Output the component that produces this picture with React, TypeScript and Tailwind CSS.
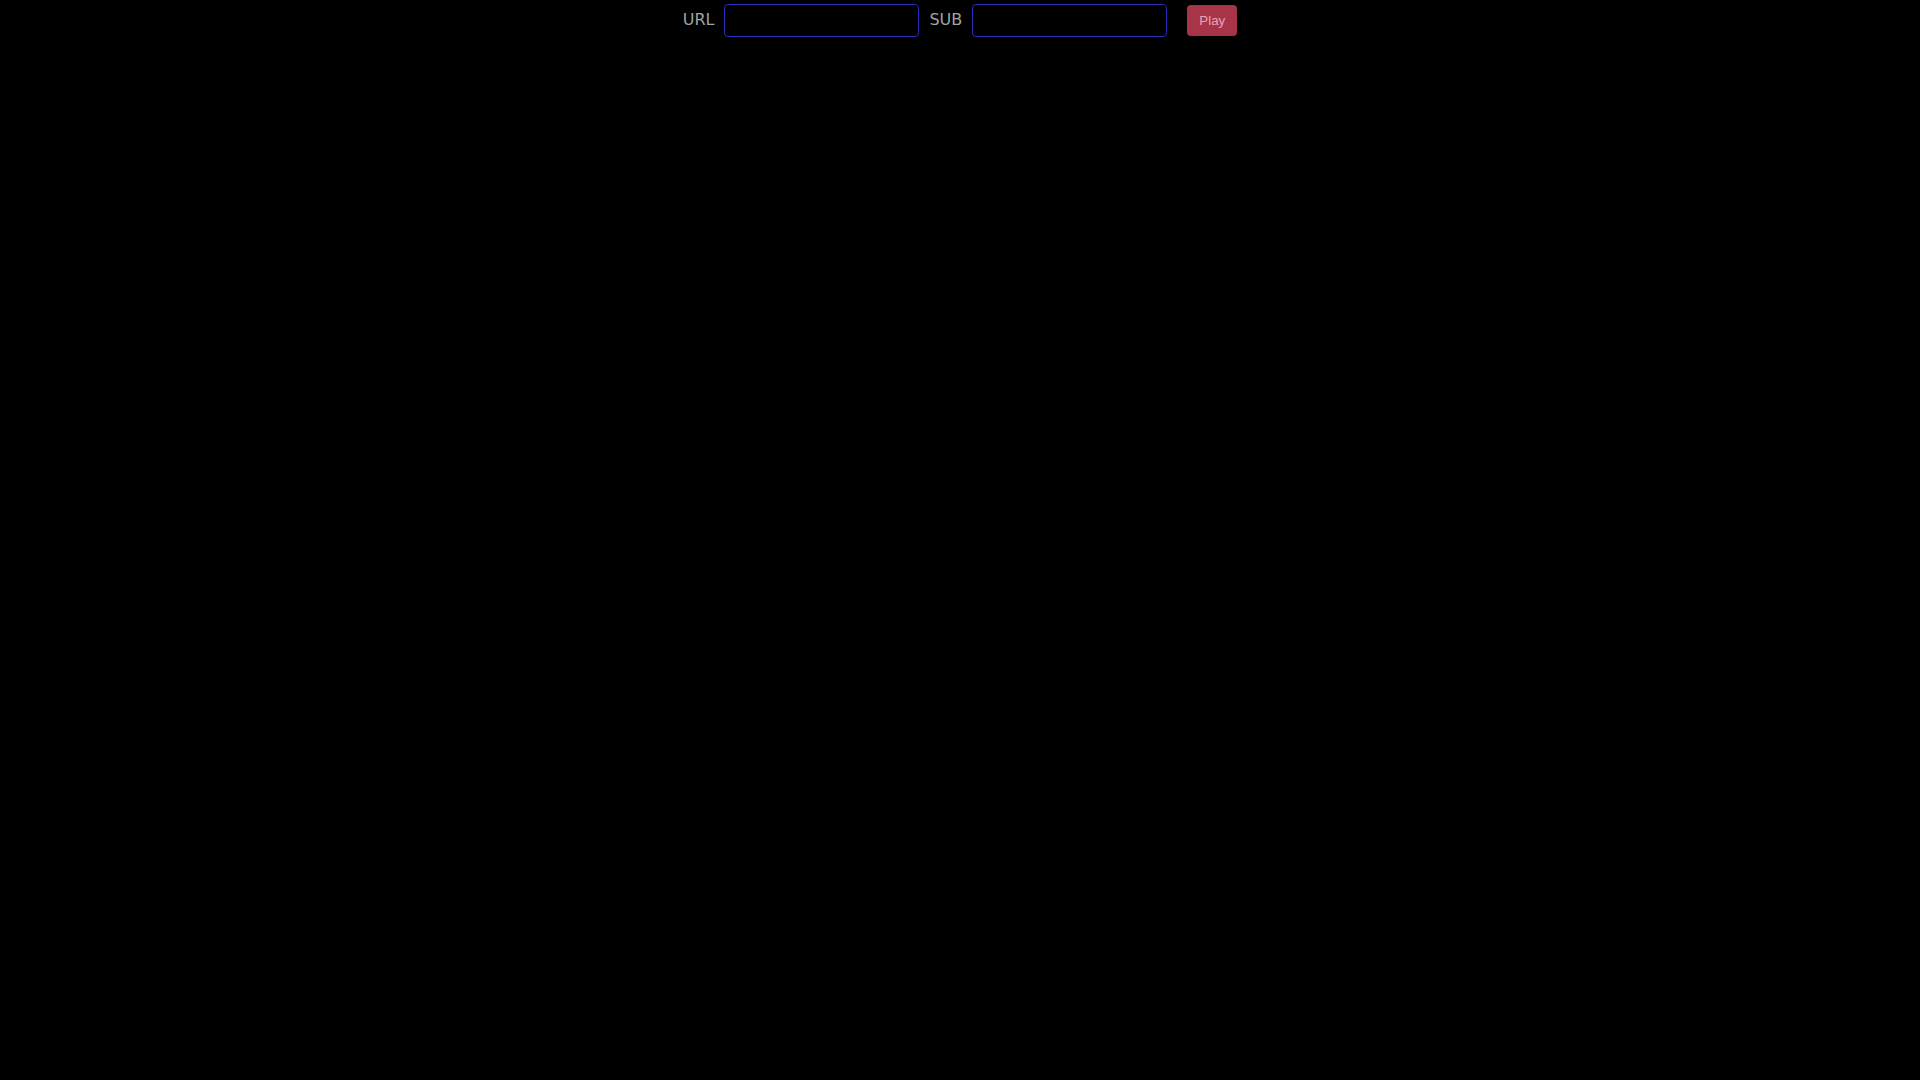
import React, { useState } from 'react'

export default function App() {
  const [url, setUrl] = useState('')
  const [sub, setSub] = useState('')

  return (
    <div className="min-h-screen w-full bg-black font-['DejaVu_Sans',sans-serif]">
      {/* Top toolbar */}
      <form
        className="flex items-center justify-center pt-[4px]"
        onSubmit={(e) => e.preventDefault()}
      >
        <label htmlFor="url" className="mr-[10px] mb-[2px] text-[16px] text-[#a3a3a3]">
          URL
        </label>
        <input
          id="url"
          value={url}
          onChange={(e) => setUrl(e.target.value)}
          className="h-[33px] w-[195px] rounded-[4px] border border-[#2a2ab8] bg-black px-2 text-[14px] text-gray-200 outline-none"
        />
        <label htmlFor="sub" className="mx-[10px] mb-[2px] text-[16px] text-[#a3a3a3]">
          SUB
        </label>
        <input
          id="sub"
          value={sub}
          onChange={(e) => setSub(e.target.value)}
          className="h-[33px] w-[195px] rounded-[4px] border border-[#2a2ab8] bg-black px-2 text-[14px] text-gray-200 outline-none"
        />
        <button
          type="submit"
          className="ml-[20px] h-[31px] w-[50px] rounded-[4px] bg-[#a8344a] font-['Liberation_Sans',Arial,sans-serif] text-[13.33px] text-[#e3a6b3]"
        >
          Play
        </button>
      </form>
    </div>
  )
}
